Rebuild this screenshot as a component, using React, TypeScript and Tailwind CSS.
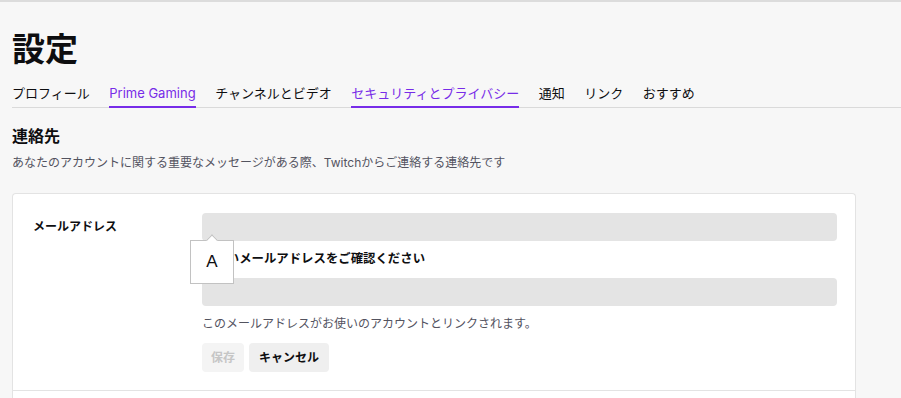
const tabs = [
  { label: 'プロフィール', active: false },
  { label: 'Prime Gaming', active: true },
  { label: 'チャンネルとビデオ', active: false },
  { label: 'セキュリティとプライバシー', active: true },
  { label: '通知', active: false },
  { label: 'リンク', active: false },
  { label: 'おすすめ', active: false },
];

const font = "font-['Inter','Noto_Sans_CJK_JP',sans-serif]";

export default function App() {
  return (
    <div className={`min-h-[398px] bg-[#f7f7f7] border-t-2 border-[#dcdcdc] text-[#0e0e10] ${font}`}>
      <div className="pl-3 pt-[27px]">
        <h1 className="text-[33px] leading-[40px] font-bold">設定</h1>
      </div>

      {/* tabs */}
      <div className="ml-3 mt-[14px] flex gap-[19.5px] border-b border-[#dadada]">
        {tabs.map((t) => (
          <div
            key={t.label}
            className={
              t.active
                ? '-mb-px border-b-2 border-[#772ce8] pb-[3px] text-[13px] leading-[20px] text-[#772ce8]'
                : '-mb-px border-b-2 border-transparent pb-[3px] text-[13px] leading-[20px]'
            }
          >
            {t.label}
          </div>
        ))}
      </div>

      <div className="px-3">
        <h2 className="mt-[16px] text-[16px] leading-[24px] font-bold">連絡先</h2>
        <p className="mt-[6px] text-[12px] leading-[18px] text-[#53535f]">
          あなたのアカウントに関する重要なメッセージがある際、Twitchからご連絡する連絡先です
        </p>

        {/* card */}
        <div className="mt-[21px] max-w-[844px] rounded-t-[4px] border border-b-0 border-[#e3e3e3] bg-white">
          <div className="flex border-b border-[#e3e3e3] pl-5 pr-[18px] pt-[19px] pb-[18px]">
            <div className="w-[169px] shrink-0 pt-[5px] text-[12px] leading-[18px] font-bold">メールアドレス</div>
            <div className="relative flex-1">
              <div className="h-7 rounded-[4px] bg-[#e4e4e4]" />
              <div className="mt-[9px] text-[12.4px] leading-[18px] font-bold">新しいメールアドレスをご確認ください</div>
              <div className="mt-[10px] h-7 rounded-[4px] bg-[#e4e4e4]" />
              <p className="mt-[9px] text-[12px] leading-[18px] text-[#53535f]">
                このメールアドレスがお使いのアカウントとリンクされます。
              </p>
              <div className="mt-[10px] flex gap-[5px]">
                <button className="h-[29px] w-[42px] rounded-[4px] bg-[#f4f4f4] text-[12px] font-bold text-[#c6c6c6]">保存</button>
                <button className="h-[29px] w-[80px] rounded-[4px] bg-[#efefef] text-[12px] font-bold text-[#0e0e10]">キャンセル</button>
              </div>

              {/* IME-like popup */}
              <div className="absolute left-[-12px] top-[27px] flex h-[44px] w-[44px] items-center justify-center border border-[#c2c2c2] bg-white font-['Liberation_Sans',sans-serif] text-[17px]">
                <span className="absolute -top-[5px] left-[17px] h-[8px] w-[8px] rotate-45 border-l border-t border-[#c2c2c2] bg-white" />
                A
              </div>
            </div>
          </div>
          <div className="h-[20px]" />
        </div>
      </div>
    </div>
  );
}
